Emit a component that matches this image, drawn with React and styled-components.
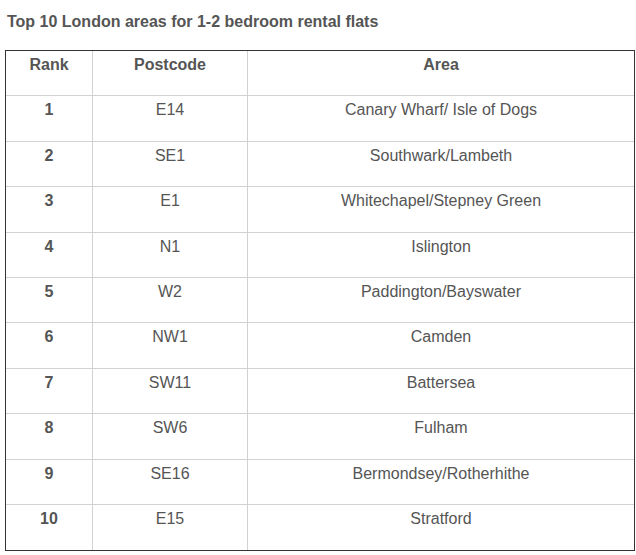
import React from 'react';
import styled, { createGlobalStyle } from 'styled-components';

const GlobalStyle = createGlobalStyle`
  body {
    margin: 0;
    background: #fff;
    font-family: "Liberation Sans", Arial, sans-serif;
    color: #555;
  }
`;

const Page = styled.div`
  padding: 13px 3px 0 5px;
`;

const Title = styled.h2`
  margin: 0 0 19px 2px;
  font-size: 16px;
  font-weight: 700;
  line-height: 18px;
  color: #555;
`;

const Table = styled.table`
  width: 628px;
  border-collapse: separate;
  border-spacing: 0;
  border: 1px solid #333;
  table-layout: fixed;

  tr:last-child td {
    border-bottom: none;
  }
`;

const Cell = styled.td`
  width: ${(p) => p.w}px;
  height: 45.4px;
  padding: 5px 8px 0;
  vertical-align: top;
  text-align: center;
  font-size: 16px;
  line-height: 18px;
  font-weight: ${(p) => (p.bold ? 700 : 400)};
  color: #555;
  border-right: 1px solid #d2d2d2;
  border-bottom: 1px solid #d2d2d2;
  box-sizing: border-box;

  &:last-child {
    border-right: none;
  }
`;

const rows = [
  ['1', 'E14', 'Canary Wharf/ Isle of Dogs'],
  ['2', 'SE1', 'Southwark/Lambeth'],
  ['3', 'E1', 'Whitechapel/Stepney Green'],
  ['4', 'N1', 'Islington'],
  ['5', 'W2', 'Paddington/Bayswater'],
  ['6', 'NW1', 'Camden'],
  ['7', 'SW11', 'Battersea'],
  ['8', 'SW6', 'Fulham'],
  ['9', 'SE16', 'Bermondsey/Rotherhithe'],
  ['10', 'E15', 'Stratford'],
];

const App = () => {
  return (
    <Page>
      <GlobalStyle />
      <Title>Top 10 London areas for 1-2 bedroom rental flats</Title>
      <Table>
        <tbody>
          <tr>
            <Cell w={87} bold>Rank</Cell>
            <Cell w={155} bold>Postcode</Cell>
            <Cell w={386} bold>Area</Cell>
          </tr>
          {rows.map(([rank, code, area]) => (
            <tr key={rank}>
              <Cell w={87} bold>{rank}</Cell>
              <Cell w={155}>{code}</Cell>
              <Cell w={386}>{area}</Cell>
            </tr>
          ))}
        </tbody>
      </Table>
    </Page>
  );
};

export default App;
